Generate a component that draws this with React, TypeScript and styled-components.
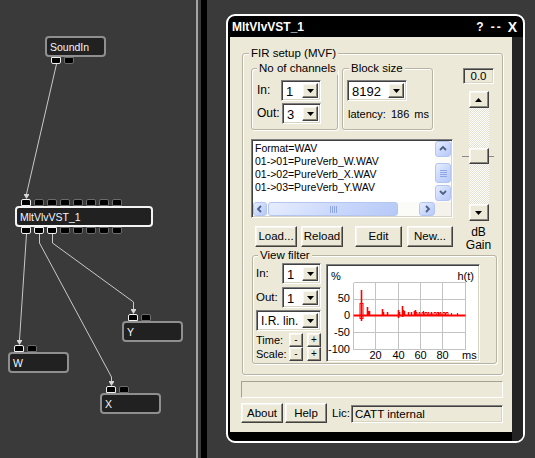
import React from 'react';
import styled, { createGlobalStyle, css } from 'styled-components';

const SANS = `"Liberation Sans", Arial, sans-serif`;
const CREAM = '#ece9d8';

const Global = createGlobalStyle`
  html, body { margin: 0; padding: 0; background: #3a3a3a; }
  body { font-family: ${SANS}; font-size: 11px; }
  #root { width: 535px; height: 458px; overflow: hidden; }
`;

const sunken = css`
  border: 1px solid;
  border-color: #808080 #ffffff #ffffff #808080;
  box-shadow: inset 1px 1px 0 #404040, inset -1px -1px 0 #d8d4c4;
`;

const raised = css`
  border: 1px solid;
  border-color: #ffffff #404040 #404040 #ffffff;
  box-shadow: inset -1px -1px 0 #8a8778, inset 1px 1px 0 #f7f6f0;
  background: ${CREAM};
`;

/* ---------- page ---------- */
const Page = styled.div`
  display: flex;
  width: 535px;
  height: 458px;
  background: #3a3a3a;
`;

const Canvas = styled.div`
  position: relative;
  width: 196px;
  flex: none;
`;

const Splitter = styled.div`
  flex: none;
  width: 3px;
  border-left: 2px solid #a4a4a4;
  border-right: 6px solid #000;
`;

const Desktop = styled.div`
  flex: 1;
  padding: 14px 0 0 19px;
`;

/* ---------- node graph ---------- */
const Wires = styled.svg`
  position: absolute;
  left: 0;
  top: 0;
  pointer-events: none;
`;

const NodeWrap = styled.div<{ $x: number; $y: number }>`
  position: absolute;
  left: ${(p) => p.$x}px;
  top: ${(p) => p.$y}px;
  display: flex;
  flex-direction: column;
`;

const PortRow = styled.div`
  display: flex;
  gap: 3px;
  padding-left: 6px;
  height: 7px;
`;

const Port = styled.div<{ $on?: boolean; $top?: boolean }>`
  box-sizing: border-box;
  width: 10px;
  height: 7px;
  background: #000;
  border: 1px solid ${(p) => (p.$on ? '#eeeeee' : '#6c6c6c')};
  border-radius: ${(p) => (p.$top ? '2px 2px 0 0' : '0 0 2px 2px')};
`;

const NodeBody = styled.div<{ $w: number; $sel?: boolean }>`
  box-sizing: border-box;
  width: ${(p) => p.$w}px;
  height: 21px;
  border: 2px solid ${(p) => (p.$sel ? '#f4f4f4' : '#8f8f8f')};
  border-radius: 4px;
  background: #212121;
  color: #f2f6ff;
  padding-left: 3px;
  display: flex;
  align-items: center;
  font-family: ${SANS};
  font-size: 10.5px;
  white-space: nowrap;
`;

function Node(props: {
  x: number;
  y: number;
  w: number;
  label: string;
  top?: boolean[];
  bottom?: boolean[];
  sel?: boolean;
}) {
  return (
    <NodeWrap $x={props.x} $y={props.y}>
      {props.top && (
        <PortRow>
          {props.top.map((on, i) => (
            <Port key={i} $on={on} $top />
          ))}
        </PortRow>
      )}
      <NodeBody $w={props.w} $sel={props.sel}>
        {props.label}
      </NodeBody>
      {props.bottom && (
        <PortRow>
          {props.bottom.map((on, i) => (
            <Port key={i} $on={on} />
          ))}
        </PortRow>
      )}
    </NodeWrap>
  );
}

function Arrow({ x, y }: { x: number; y: number }) {
  return (
    <g fill="#d8d8d8" stroke="none">
      <rect x={x - 2.5} y={y - 5} width={5} height={1} />
      <polygon points={`${x - 2.5},${y - 4} ${x + 2.5},${y - 4} ${x},${y}`} />
    </g>
  );
}

function Graph() {
  return (
    <Wires width={196} height={458}>
      <g fill="none" stroke="#c9c9c9" strokeWidth={1}>
        <path d="M56.5 64 L26.5 194" />
        <path d="M26.5 234 L19.5 340" />
        <path d="M39.5 234 L39.5 243 L111.5 377 L111.5 381" />
        <path d="M52.5 234 L52.5 243 L133.5 302 L133.5 309" />
      </g>
      <Arrow x={26.5} y={199} />
      <Arrow x={19.5} y={345} />
      <Arrow x={111.5} y={386} />
      <Arrow x={133.5} y={314} />
    </Wires>
  );
}

/* ---------- window ---------- */
const Win = styled.div`
  box-sizing: border-box;
  width: 299px;
  height: 429px;
  border: 2px solid #fff;
  border-radius: 9px;
  background: #000;
  display: flex;
  flex-direction: column;
  overflow: hidden;
`;

const TitleBar = styled.div`
  height: 21px;
  flex: none;
  display: flex;
  align-items: center;
  padding: 0 6px 0 4px;
  color: #fff;
  font-family: ${SANS};
  font-weight: bold;
  font-size: 12px;
`;

const TitleText = styled.span`
  flex: 1;
`;

const TitleCtl = styled.span<{ $ml: number; $fs?: number; $ls?: number }>`
  margin-left: ${(p) => p.$ml}px;
  font-size: ${(p) => p.$fs ?? 12}px;
  letter-spacing: ${(p) => p.$ls ?? 0}px;
`;

const WinBody = styled.div`
  flex: 1;
  display: flex;
  padding-left: 2px;
`;

const Gutter = styled.div`
  flex: 1;
  background: #242424;
`;

const Panel = styled.div`
  box-sizing: border-box;
  flex: none;
  width: 282px;
  height: 395px;
  background: ${CREAM};
  padding: 16px 9px 9px 11px;
  display: flex;
  flex-direction: column;
  font-family: ${SANS};
  font-size: 11px;
  line-height: 13px;
  color: #000;
`;

/* ---------- group boxes ---------- */
const Group = styled.div<{ $w?: number; $pad: string; $mt?: number; $ml?: number }>`
  box-sizing: border-box;
  ${(p) => (p.$w ? `width: ${p.$w}px;` : '')}
  margin-top: ${(p) => p.$mt ?? 0}px;
  margin-left: ${(p) => p.$ml ?? 0}px;
  padding: ${(p) => p.$pad};
  border: 1px solid #b7b4a4;
  border-radius: 3px;
  box-shadow: inset 1px 1px 0 #fff, 1px 1px 0 #fff;
  display: flex;
  flex-direction: column;
`;

const Legend = styled.div<{ $ml: number }>`
  align-self: flex-start;
  margin: -7px 0 0 ${(p) => p.$ml}px;
  padding: 0 2px;
  height: 13px;
  line-height: 13px;
  font-size: 11.5px;
  background: ${CREAM};
  white-space: nowrap;
`;

const TopArea = styled.div`
  display: flex;
  gap: 7px;
  align-items: flex-start;
`;

const LeftCol = styled.div`
  width: 202px;
  display: flex;
  flex-direction: column;
`;

const ChannelsRow = styled.div`
  display: flex;
  gap: 4px;
  margin-top: 8px;
`;

const FieldRow = styled.div<{ $mt?: number; $h?: number }>`
  display: flex;
  align-items: center;
  height: ${(p) => p.$h ?? 21}px;
  margin-top: ${(p) => p.$mt ?? 0}px;
`;

const FieldLabel = styled.span<{ $w: number; $fs?: number }>`
  width: ${(p) => p.$w}px;
  flex: none;
  font-size: ${(p) => p.$fs ?? 11}px;
  white-space: nowrap;
`;

const Combo = styled.div<{ $w: number; $mt?: number }>`
  ${sunken};
  box-sizing: border-box;
  width: ${(p) => p.$w}px;
  height: 21px;
  flex: none;
  margin-top: ${(p) => p.$mt ?? 0}px;
  background: #fff;
  display: flex;
  padding: 2px;
`;

const ComboValue = styled.span<{ $fs: number }>`
  flex: 1;
  padding-left: 2px;
  font-size: ${(p) => p.$fs}px;
  line-height: 17px;
  white-space: nowrap;
  overflow: hidden;
`;

const DropBtn = styled.span`
  ${raised};
  box-sizing: border-box;
  width: 16px;
  flex: none;
  display: flex;
  align-items: center;
  justify-content: center;
`;

const Latency = styled.div`
  margin-top: 7px;
  padding-left: 1px;
  display: flex;
  gap: 5px;
  white-space: nowrap;
`;

function DownTri() {
  return (
    <svg width="7" height="4" viewBox="0 0 7 4">
      <polygon points="0,0 7,0 3.5,4" fill="#000" />
    </svg>
  );
}
function UpTri() {
  return (
    <svg width="7" height="4" viewBox="0 0 7 4">
      <polygon points="0,4 7,4 3.5,0" fill="#000" />
    </svg>
  );
}

function ComboBox({ w, value, mt, fs = 13 }: { w: number; value: string; mt?: number; fs?: number }) {
  return (
    <Combo $w={w} $mt={mt}>
      <ComboValue $fs={fs}>{value}</ComboValue>
      <DropBtn>
        <DownTri />
      </DropBtn>
    </Combo>
  );
}

/* ---------- list box ---------- */
const ListBox = styled.div`
  ${sunken};
  box-sizing: border-box;
  width: 202px;
  height: 79px;
  margin-top: 9px;
  background: #fff;
  padding: 1px;
  display: grid;
  grid-template-columns: 1fr 16px;
  grid-template-rows: 1fr 14px;
`;

const ListLines = styled.div`
  padding: 1px 0 0 2px;
  font-size: 10.5px;
  line-height: 13px;
  white-space: nowrap;
  overflow: hidden;
`;

const VScroll = styled.div`
  display: flex;
  flex-direction: column;
  background: #fbfbf8;
`;

const HScroll = styled.div`
  display: flex;
  background: #fbfbf8;
`;

const Corner = styled.div`
  background: #f4f2ea;
`;

const XpBtn = styled.div<{ $w: number; $h: number; $ml?: number; $mt?: number }>`
  box-sizing: border-box;
  width: ${(p) => p.$w}px;
  height: ${(p) => p.$h}px;
  margin-left: ${(p) => p.$ml ?? 0}px;
  margin-top: ${(p) => p.$mt ?? 0}px;
  flex: none;
  border: 1px solid #b4c6f0;
  border-radius: 3px;
  background: linear-gradient(135deg, #e6edfe 0%, #c6d5fb 60%, #b6c9f6 100%);
  display: flex;
  align-items: center;
  justify-content: center;
`;

function Chevron({ dir }: { dir: 'u' | 'd' | 'l' | 'r' }) {
  const pts: Record<string, string> = {
    u: '1,5 4,2 7,5',
    d: '1,2 4,5 7,2',
    l: '5,1 2,4 5,7',
    r: '3,1 6,4 3,7',
  };
  return (
    <svg width="8" height="8" viewBox="0 0 8 8">
      <polyline points={pts[dir]} fill="none" stroke="#4d6185" strokeWidth="1.8" />
    </svg>
  );
}

function Grip({ vertical }: { vertical?: boolean }) {
  const lines = [0, 2, 4, 6];
  return vertical ? (
    <svg width="7" height="7" viewBox="0 0 7 7">
      {lines.map((v) => (
        <line key={v} x1="0" x2="7" y1={v + 0.5} y2={v + 0.5} stroke="#8ea6e6" />
      ))}
    </svg>
  ) : (
    <svg width="7" height="7" viewBox="0 0 7 7">
      {lines.map((v) => (
        <line key={v} y1="0" y2="7" x1={v + 0.5} x2={v + 0.5} stroke="#8ea6e6" />
      ))}
    </svg>
  );
}

/* ---------- buttons ---------- */
const ButtonRow = styled.div<{ $mt: number }>`
  display: flex;
  margin-top: ${(p) => p.$mt}px;
`;

const Button = styled.div<{ $w: number; $ml?: number; $h?: number }>`
  ${raised};
  box-sizing: border-box;
  width: ${(p) => p.$w}px;
  height: ${(p) => p.$h ?? 21}px;
  margin-left: ${(p) => p.$ml ?? 0}px;
  flex: none;
  display: flex;
  align-items: center;
  justify-content: center;
  font-size: 11.5px;
  white-space: nowrap;
`;

/* ---------- gain ---------- */
const GainCol = styled.div`
  width: 37px;
  margin-top: 8px;
  display: flex;
  flex-direction: column;
  align-items: center;
`;

const GainValue = styled.div`
  ${sunken};
  box-sizing: border-box;
  width: 31px;
  height: 16px;
  background: ${CREAM};
  display: flex;
  align-items: center;
  justify-content: center;
  font-size: 11.5px;
`;

const SliderBox = styled.div`
  margin-top: 7px;
  width: 31px;
  display: flex;
  flex-direction: column;
  align-items: center;
`;

const Track = styled.div`
  position: relative;
  width: 20px;
  height: 96px;
  background: repeating-conic-gradient(#ffffff 0 25%, #e4e1d1 0 50%) 0 0 / 2px 2px;
`;

const Thumb = styled.div`
  ${raised};
  box-sizing: border-box;
  position: absolute;
  left: 0;
  top: 40px;
  width: 20px;
  height: 16px;
`;

const Tick = styled.div<{ $side: 'l' | 'r' }>`
  position: absolute;
  top: 48px;
  ${(p) => (p.$side === 'l' ? 'left: -7px;' : 'right: -5px;')}
  width: ${(p) => (p.$side === 'l' ? 7 : 5)}px;
  height: 1px;
  background: #8a8a8a;
`;

const GainLabel = styled.div`
  margin-top: 5px;
  line-height: 13px;
  text-align: center;
  font-size: 12px;
`;

/* ---------- view filter ---------- */
const VFRow = styled.div`
  display: flex;
  gap: 5px;
  align-items: flex-start;
`;

const VFLeft = styled.div`
  width: 65px;
  margin-top: 1px;
  display: flex;
  flex-direction: column;
`;

const TinyBtn = styled.div<{ $ml?: number }>`
  ${raised};
  box-sizing: border-box;
  width: 14px;
  height: 14px;
  margin-left: ${(p) => p.$ml ?? 0}px;
  flex: none;
  display: flex;
  align-items: center;
  justify-content: center;
  font-size: 10px;
  line-height: 10px;
`;

const ChartFrame = styled.div`
  ${sunken};
  box-sizing: border-box;
  width: 154px;
  height: 98px;
  margin-top: 2px;
  background: #fff;
  flex: none;
`;

const ChartSvg = styled.svg`
  display: block;
  font-family: ${SANS};
`;

function Chart() {
  const gx = [26.5, 48.5, 71.5, 93.5, 115.5, 138.5];
  const gy = [17.5, 34.5, 50.5, 67.5, 84.5];
  const spikes: [number, number, number][] = [
    [34.5, 25, 56],
    [40.5, 42, 51],
    [41.5, 46, 50],
    [42.5, 46, 50],
    [55.5, 44, 51],
    [56.5, 47, 50],
    [60.5, 47, 51],
    [71.5, 45, 53],
    [72.5, 47, 50],
    [75.5, 41, 52],
    [76.5, 45, 50],
    [77.5, 46, 50],
    [81.5, 47, 51],
    [84.5, 47, 50],
    [87.5, 46, 51],
    [88.5, 45, 50],
  ];
  let wave = 'M89 50';
  const steps = [1, 2, 1, 2, 2, 1, 2, 1, 1, 2, 1, 2, 2, 1, 2, 1, 1, 2, 2, 1, 2];
  let x = 89;
  steps.forEach((s, i) => {
    const y = i % 2 === 0 ? 47.5 : 50;
    wave += ` L${x} ${y} L${x + s} ${y}`;
    x += s;
  });
  wave += ` L${x} 50`;
  const tail: [number, number][] = [
    [96.5, 46],
    [104.5, 47],
    [111.5, 47],
    [118.5, 48],
    [124.5, 48],
    [130.5, 48],
  ];
  return (
    <ChartSvg width={152} height={96} viewBox="0 0 152 96">
      <g stroke="#c3c3c3" strokeWidth={1} shapeRendering="crispEdges">
        {gx.map((v) => (
          <line key={'x' + v} x1={v} x2={v} y1={17.5} y2={84.5} />
        ))}
        {gy.map((v) => (
          <line key={'y' + v} x1={26.5} x2={138.5} y1={v} y2={v} />
        ))}
      </g>
      <g fontSize="11" fill="#000">
        <text x={4} y={15}>%</text>
        <text x={147} y={15} textAnchor="end">h(t)</text>
        <text x={23} y={37} textAnchor="end">50</text>
        <text x={23} y={54} textAnchor="end">0</text>
        <text x={23} y={71} textAnchor="end">-50</text>
        <text x={23} y={88} textAnchor="end">-100</text>
        <text x={48.5} y={94} textAnchor="middle">20</text>
        <text x={71.5} y={94} textAnchor="middle">40</text>
        <text x={93.5} y={94} textAnchor="middle">60</text>
        <text x={115.5} y={94} textAnchor="middle">80</text>
        <text x={135} y={94}>ms</text>
      </g>
      <g stroke="#ff0000" fill="none">
        <line x1={26.5} x2={138.5} y1={50.5} y2={50.5} strokeWidth={1.8} />
        <rect x={33} y={38.5} width={3} height={15} strokeWidth={1} />
        {spikes.map(([sx, t, b]) => (
          <line key={'s' + sx} x1={sx} x2={sx} y1={t} y2={b} strokeWidth={1.6} />
        ))}
        {tail.map(([sx, t]) => (
          <line key={'t' + sx} x1={sx} x2={sx} y1={t} y2={51} strokeWidth={1.2} />
        ))}
        <path d={wave} strokeWidth={1} />
      </g>
    </ChartSvg>
  );
}

/* ---------- bottom ---------- */
const StatusField = styled.div`
  box-sizing: border-box;
  width: 262px;
  height: 17px;
  margin-top: 6px;
  border: 1px solid;
  border-color: #a5a294 #ffffff #ffffff #a5a294;
`;

const BottomRow = styled.div`
  display: flex;
  align-items: center;
  height: 20px;
  margin-top: 5px;
`;

const LicLabel = styled.span`
  margin-left: 5px;
  font-size: 11.5px;
`;

const LicField = styled.div`
  ${sunken};
  box-sizing: border-box;
  width: 152px;
  height: 18px;
  margin-left: auto;
  margin-top: 2px;
  background: ${CREAM};
  padding-left: 3px;
  display: flex;
  align-items: center;
  font-size: 11.5px;
  white-space: nowrap;
`;

export default function App() {
  return (
    <>
      <Global />
      <Page>
        <Canvas>
          <Graph />
          <Node x={45} y={36} w={61} label="SoundIn" bottom={[true, false]} />
          <Node
            x={15}
            y={199}
            w={138}
            sel
            label="MltVlvVST_1"
            top={[true, false, false, false, false, false, false, false]}
            bottom={[true, true, true, false, false, false, false, false]}
          />
          <Node x={122} y={314} w={61} label="Y" top={[true, false]} />
          <Node x={8} y={345} w={61} label="W" top={[true, false]} />
          <Node x={100} y={386} w={61} label="X" top={[true, false]} />
        </Canvas>
        <Splitter />
        <Desktop>
          <Win>
            <TitleBar>
              <TitleText>MltVlvVST_1</TitleText>
              <TitleCtl $ml={0}>?</TitleCtl>
              <TitleCtl $ml={7} $ls={2}>--</TitleCtl>
              <TitleCtl $ml={5} $fs={14}>X</TitleCtl>
            </TitleBar>
            <WinBody>
              <Panel>
                <Group $mt={0} $ml={1} $pad="0 5px 10px 8px">
                  <Legend $ml={-2}>FIR setup (MVF)</Legend>
                  <TopArea>
                    <LeftCol>
                      <ChannelsRow>
                        <Group $w={87} $pad="0 0 5px 5px">
                          <Legend $ml={0}>No of channels</Legend>
                          <FieldRow $mt={5}>
                            <FieldLabel $w={24} $fs={12}>In:</FieldLabel>
                            <ComboBox w={40} value="1" />
                          </FieldRow>
                          <FieldRow $mt={2}>
                            <FieldLabel $w={25} $fs={12}>Out:</FieldLabel>
                            <ComboBox w={39} value="3" />
                          </FieldRow>
                        </Group>
                        <Group $w={91} $pad="0 0 5px 4px">
                          <Legend $ml={2}>Block size</Legend>
                          <ComboBox w={60} value="8192" mt={5} />
                          <Latency>
                            <span>latency:</span>
                            <span>186</span>
                            <span>ms</span>
                          </Latency>
                        </Group>
                      </ChannelsRow>
                      <ListBox>
                        <ListLines>
                          <div>Format=WAV</div>
                          <div>01-&gt;01=PureVerb_W.WAV</div>
                          <div>01-&gt;02=PureVerb_X.WAV</div>
                          <div>01-&gt;03=PureVerb_Y.WAV</div>
                        </ListLines>
                        <VScroll>
                          <XpBtn $w={16} $h={16}>
                            <Chevron dir="u" />
                          </XpBtn>
                          <XpBtn $w={16} $h={20} $mt={6}>
                            <Grip vertical />
                          </XpBtn>
                          <XpBtn $w={16} $h={16} $mt={2}>
                            <Chevron dir="d" />
                          </XpBtn>
                        </VScroll>
                        <HScroll>
                          <XpBtn $w={14} $h={14}>
                            <Chevron dir="l" />
                          </XpBtn>
                          <XpBtn $w={130} $h={14} $ml={1}>
                            <Grip />
                          </XpBtn>
                          <XpBtn $w={16} $h={14} $ml={21}>
                            <Chevron dir="r" />
                          </XpBtn>
                        </HScroll>
                        <Corner />
                      </ListBox>
                      <ButtonRow $mt={8}>
                        <Button $w={42} $ml={4}>Load...</Button>
                        <Button $w={42} $ml={4}>Reload</Button>
                        <Button $w={47} $ml={12}>Edit</Button>
                        <Button $w={46} $ml={5}>New...</Button>
                      </ButtonRow>
                    </LeftCol>
                    <GainCol>
                      <GainValue>0.0</GainValue>
                      <SliderBox>
                        <Button $w={20} $h={17}>
                          <UpTri />
                        </Button>
                        <Track>
                          <Tick $side="l" />
                          <Tick $side="r" />
                          <Thumb />
                        </Track>
                        <Button $w={20} $h={17}>
                          <DownTri />
                        </Button>
                      </SliderBox>
                      <GainLabel>
                        dB
                        <br />
                        Gain
                      </GainLabel>
                    </GainCol>
                  </TopArea>
                  <Group $mt={3} $ml={1} $pad="0 0 1px 3px">
                    <Legend $ml={2}>View filter</Legend>
                    <VFRow>
                      <VFLeft>
                        <FieldRow>
                          <FieldLabel $w={26} $fs={11.5}>In:</FieldLabel>
                          <ComboBox w={39} value="1" />
                        </FieldRow>
                        <FieldRow $mt={3}>
                          <FieldLabel $w={26} $fs={11.5}>Out:</FieldLabel>
                          <ComboBox w={39} value="1" />
                        </FieldRow>
                        <ComboBox w={65} value="I.R. lin." mt={2} fs={12} />
                        <FieldRow $mt={2} $h={14}>
                          <FieldLabel $w={33}>Time:</FieldLabel>
                          <TinyBtn>-</TinyBtn>
                          <TinyBtn $ml={4}>+</TinyBtn>
                        </FieldRow>
                        <FieldRow $h={14}>
                          <FieldLabel $w={33}>Scale:</FieldLabel>
                          <TinyBtn>-</TinyBtn>
                          <TinyBtn $ml={4}>+</TinyBtn>
                        </FieldRow>
                      </VFLeft>
                      <ChartFrame>
                        <Chart />
                      </ChartFrame>
                    </VFRow>
                  </Group>
                </Group>
                <StatusField />
                <BottomRow>
                  <Button $w={42} $h={20}>About</Button>
                  <Button $w={42} $h={20} $ml={2}>Help</Button>
                  <LicLabel>Lic:</LicLabel>
                  <LicField>CATT internal</LicField>
                </BottomRow>
              </Panel>
              <Gutter />
            </WinBody>
          </Win>
        </Desktop>
      </Page>
    </>
  );
}
